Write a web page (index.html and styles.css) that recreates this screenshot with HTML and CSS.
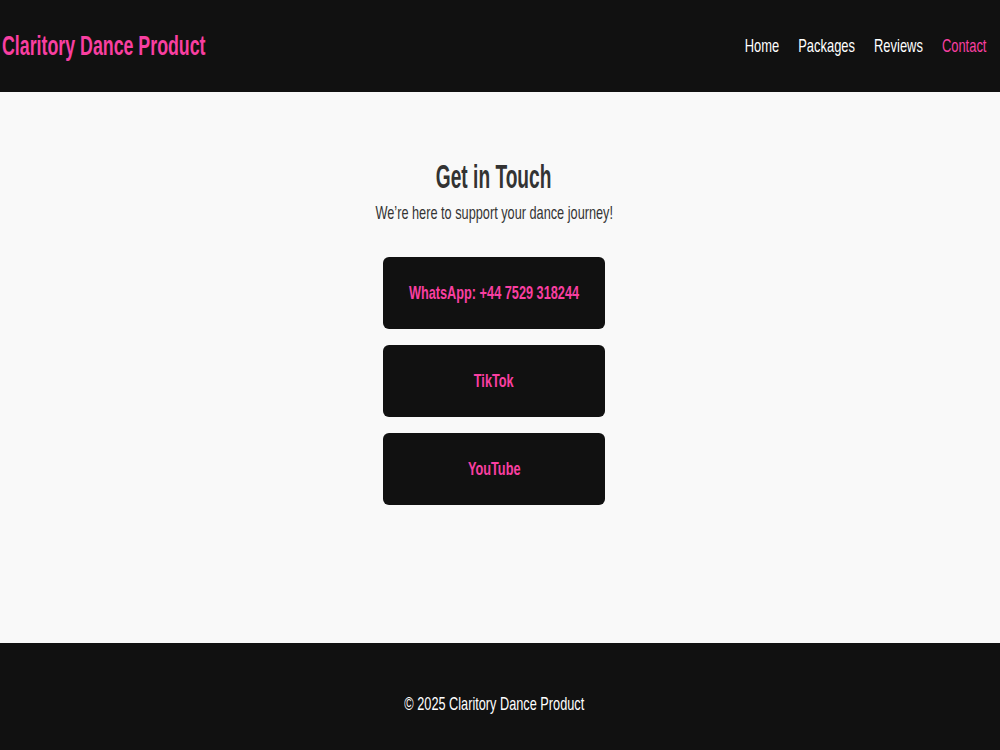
FILE: index.html
```html
<html>
<head>
    <title>Claritory Dance Product - Contact</title>
    <link rel="stylesheet" href="styles.css">
</head>
<body>
    <header class="topbar">
        <h1 class="logo">Claritory Dance Product</h1>
        <nav class="nav">
            <a href="#">Home</a>
            <a href="#">Packages</a>
            <a href="#">Reviews</a>
            <a href="#" class="active">Contact</a>
        </nav>
    </header>

    <main class="contact">
        <h2><span class="narrow head">Get in Touch</span></h2>
        <p class="lead"><span class="narrow">We’re here to support your dance journey!</span></p>
        <div class="links">
            <a href="#" class="btn"><span class="narrow">WhatsApp: +44 7529 318244</span></a>
            <a href="#" class="btn"><span class="narrow">TikTok</span></a>
            <a href="#" class="btn"><span class="narrow">YouTube</span></a>
        </div>
    </main>

    <footer class="footer">
        <p><span class="narrow">© 2025 Claritory Dance Product</span></p>
    </footer>
</body>
</html>
```

FILE: styles.css
```css
body {
    margin: 0;
    font-family: "Liberation Sans", Arial, sans-serif;
    background-color: #f9f9f9;
    color: #333;
}
/* the type on this page is a condensed sans */
.narrow {
    display: inline-block;
    white-space: nowrap;
    transform: scaleX(0.67);
}
.topbar {
    height: 92px;
    box-sizing: border-box;
    padding: 0 14px 0 2px;
    display: flex;
    align-items: center;
    justify-content: space-between;
    background-color: #111;
}
.logo {
    margin: 0;
    font-size: 28px;
    color: #f93fa1;
    white-space: nowrap;
    transform: scaleX(0.635);
    transform-origin: left center;
}
.nav {
    display: flex;
    gap: 28px;
    transform: scaleX(0.68);
    transform-origin: right center;
}
.nav a {
    color: #fff;
    text-decoration: none;
    font-size: 19px;
}
.nav a.active {
    color: #f93fa1;
}
.contact {
    min-height: 551px;
    box-sizing: border-box;
    padding: 66px 12px 0 0;
    text-align: center;
}
.contact h2 {
    margin: 0;
    font-size: 33px;
    color: #333;
}
.narrow.head {
    transform: scaleX(0.58);
}
.lead {
    margin: 6px 0 0;
    font-size: 19px;
    color: #333;
}
.links {
    margin-top: 33px;
    display: flex;
    flex-direction: column;
    align-items: center;
    gap: 16px;
}
.btn {
    width: 222px;
    height: 72px;
    display: flex;
    align-items: center;
    justify-content: center;
    background-color: #111;
    border-radius: 6px;
    color: #f93fa1;
    font-weight: bold;
    font-size: 19px;
    text-decoration: none;
}
.footer {
    padding: 50px 12px 50px 0;
    background-color: #111;
    color: #fff;
    text-align: center;
}
.footer p {
    margin: 0;
    font-size: 19px;
}
```
